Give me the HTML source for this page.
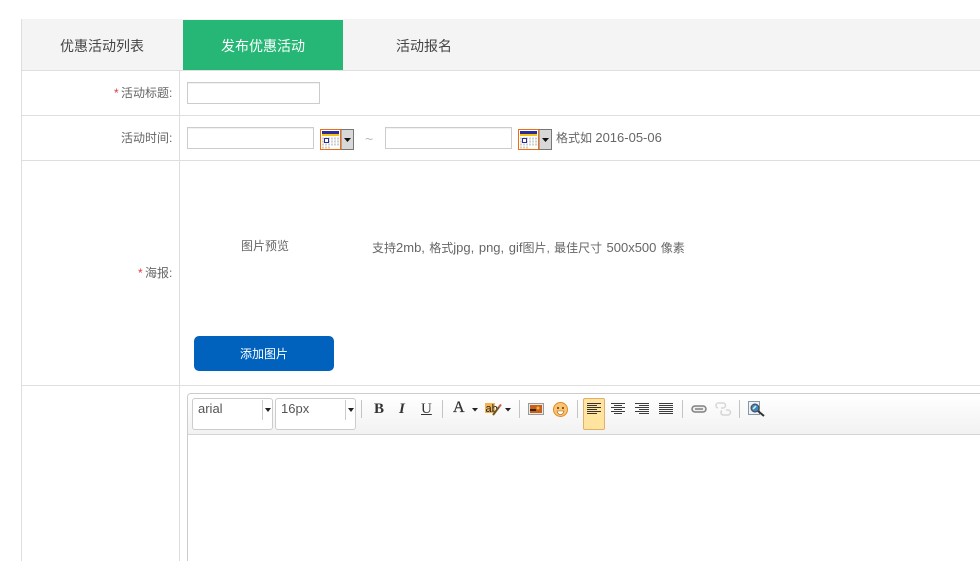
<!DOCTYPE html>
<html lang="zh">
<head>
<meta charset="utf-8">
<title>发布优惠活动</title>
<style>
html,body{margin:0;padding:0;background:#fff;width:980px;height:561px;overflow:hidden;}
#w{position:relative;width:980px;height:561px;overflow:hidden;font-family:"Liberation Sans","Noto Sans CJK SC",sans-serif;font-size:12px;color:#666;}
.a{position:absolute;white-space:nowrap;}
.l{position:absolute;background:#dedede;}
.inp{position:absolute;box-sizing:border-box;border:1px solid #ccc;background:#fff;height:22px;box-shadow:inset 0 1px 1px rgba(0,0,0,.06);}
.sel{position:absolute;box-sizing:border-box;top:398px;height:32px;width:81px;border:1px solid #ccc;border-radius:3px;background:#fff;font-size:13px;color:#555;padding-left:5px;line-height:19px;}
.sel i{position:absolute;left:69px;top:1px;width:1px;height:20px;background:#ccc;}
.sel b{position:absolute;left:72px;top:9px;border:3px solid transparent;border-top:4px solid #222;border-bottom:0;}
.sep{position:absolute;top:400px;width:1px;height:18px;background:#c4c4c4;}
svg{position:absolute;overflow:visible;}
.r{color:#e4393c;}
.n{font-size:13px;}
</style>
</head>
<body>
<div id="w">
<div class="a" style="left:21px;top:19px;width:959px;height:51px;background:#f4f4f4;"></div>
<div class="a" style="left:183px;top:20px;width:160px;height:50px;background:#26b776;"></div>
<div class="a" style="left:60px;top:37px;font-size:14px;line-height:18px;color:#444;">优惠活动列表</div>
<div class="a" style="left:221px;top:37px;font-size:14px;line-height:18px;color:#fff;">发布优惠活动</div>
<div class="a" style="left:396px;top:37px;font-size:14px;line-height:18px;color:#444;">活动报名</div>

<div class="l" style="left:21px;top:19px;width:1px;height:542px;"></div>
<div class="l" style="left:179px;top:70px;width:1px;height:491px;"></div>
<div class="l" style="left:21px;top:70px;width:959px;height:1px;"></div>
<div class="l" style="left:21px;top:115px;width:959px;height:1px;"></div>
<div class="l" style="left:21px;top:160px;width:959px;height:1px;"></div>
<div class="l" style="left:21px;top:385px;width:959px;height:1px;"></div>

<div class="a" style="left:114px;top:85px;line-height:16px;"><span class="r">*</span></div>
<div class="a" style="left:121px;top:85px;line-height:16px;">活动标题:</div>
<div class="a" style="left:121px;top:130px;line-height:16px;">活动时间:</div>
<div class="a" style="left:138px;top:265px;line-height:16px;"><span class="r">*</span></div>
<div class="a" style="left:145px;top:265px;line-height:16px;">海报:</div>

<div class="inp" style="left:187px;top:82px;width:133px;"></div>
<div class="inp" style="left:187px;top:127px;width:127px;"></div>
<div class="inp" style="left:385px;top:127px;width:127px;"></div>

<!-- date picker buttons -->
<svg style="left:320px;top:129px;" width="34" height="21" viewBox="0 0 34 21">
<rect x="21" y="0.500" width="12.500" height="20" fill="#d8d8d8" stroke="#777"/>
<path d="M24 9h7l-3.500 4z" fill="#111"/>
<rect x="0.500" y="0.500" width="20" height="20" fill="#fff" stroke="#f26b0c"/>
<rect x="2" y="2" width="17" height="3" fill="#2b2b9a"/><rect x="2" y="5" width="17" height="2" fill="#f3c316"/>
<path d="M2 9.500h17M2 12.500h17M2 15.500h17M2 18.500h9" stroke="#cfcfcf" stroke-width="2" stroke-dasharray="2 1" fill="none"/>
<rect x="4.500" y="9.500" width="4" height="4" fill="#fff" stroke="#2b2b9a"/>
</svg>
<svg style="left:518px;top:129px;" width="34" height="21" viewBox="0 0 34 21">
<rect x="21" y="0.500" width="12.500" height="20" fill="#d8d8d8" stroke="#777"/>
<path d="M24 9h7l-3.500 4z" fill="#111"/>
<rect x="0.500" y="0.500" width="20" height="20" fill="#fff" stroke="#f26b0c"/>
<rect x="2" y="2" width="17" height="3" fill="#2b2b9a"/><rect x="2" y="5" width="17" height="2" fill="#f3c316"/>
<path d="M2 9.500h17M2 12.500h17M2 15.500h17M2 18.500h9" stroke="#cfcfcf" stroke-width="2" stroke-dasharray="2 1" fill="none"/>
<rect x="4.500" y="9.500" width="4" height="4" fill="#fff" stroke="#2b2b9a"/>
</svg>
<div class="a" style="left:365px;top:131px;line-height:16px;font-size:14px;color:#bbb;">~</div>
<div class="a" style="left:556px;top:130px;line-height:16px;">格式如 <span class="n">2016-05-06</span></div>

<div class="a" style="left:241px;top:238px;line-height:16px;">图片预览</div>
<div class="a" style="left:372px;top:240px;line-height:16px;word-spacing:1px;">支持<span class="n">2mb,</span> 格式<span class="n">jpg, png, gif</span>图片, 最佳尺寸 <span class="n">500x500</span> 像素</div>
<div class="a" style="left:194px;top:336px;width:140px;height:35px;background:#0062bd;border-radius:5px;color:#fff;text-align:center;line-height:36px;">添加图片</div>

<!-- editor -->
<div class="a" style="left:187px;top:393px;width:800px;height:180px;box-sizing:border-box;border:1px solid #ccc;border-radius:4px 0 0 0;background:#fff;"></div>
<div class="a" style="left:188px;top:394px;width:792px;height:40px;border-radius:3px 0 0 0;background:linear-gradient(#fff,#f2f2f2);border-bottom:1px solid #d4d4d4;"></div>

<div class="sel" style="left:192px;">arial<i></i><b></b></div>
<div class="sel" style="left:275px;">16px<i></i><b></b></div>
<div class="sep" style="left:361px;"></div>
<div class="a" style="left:374px;top:401px;font:bold 15px/16px 'Liberation Serif',serif;color:#333;">B</div>
<div class="a" style="left:399px;top:401px;font:italic bold 15px/16px 'Liberation Serif',serif;color:#333;">I</div>
<div class="a" style="left:421px;top:401px;font:15px/16px 'Liberation Serif',serif;text-decoration:underline;color:#333;">U</div>
<div class="sep" style="left:442px;"></div>
<div class="a" style="left:453px;top:400px;font:16px/16px 'Liberation Serif',serif;-webkit-text-stroke:.3px #333;color:#333;">A</div>
<svg style="left:472px;top:408px;" width="6" height="4"><path d="M0 0h6l-3 3.500z" fill="#222"/></svg>
<!-- highlight -->
<svg style="left:485px;top:402px;" width="18" height="14" viewBox="0 0 18 14">
<rect x="0" y="1" width="10" height="10" fill="#f5b454"/>
<text x="0.500" y="10" font-family="Liberation Sans" font-size="11" fill="#222">ab</text>
<path d="M8 13l6-8" stroke="#6b5a20" stroke-width="2"/><path d="M14 5l2-2.500" stroke="#d9534f" stroke-width="2"/>
</svg>
<svg style="left:505px;top:408px;" width="6" height="4"><path d="M0 0h6l-3 3.500z" fill="#222"/></svg>
<div class="sep" style="left:519px;"></div>
<!-- image -->
<svg style="left:528px;top:403px;" width="16" height="12" viewBox="0 0 16 12">
<rect x="0.500" y="0.500" width="15" height="11" fill="#e8e8e8" stroke="#999"/>
<rect x="2" y="2" width="12" height="8" fill="#c9601a"/><rect x="2" y="6" width="6" height="2" fill="#3a2410"/><circle cx="10" cy="5" r="1.500" fill="#f6b33c"/>
</svg>
<!-- smiley -->
<svg style="left:553px;top:402px;" width="15" height="15" viewBox="0 0 15 15">
<circle cx="7.500" cy="7.500" r="7" fill="#f8c675" stroke="#e08a22"/>
<circle cx="5" cy="6" r="1.100" fill="#8a4a10"/><circle cx="10" cy="6" r="1.100" fill="#8a4a10"/>
<path d="M4 9h7q-1 3.500-3.500 3.500T4 9z" fill="#fff" stroke="#a85f14" stroke-width=".6"/>
</svg>
<div class="sep" style="left:577px;"></div>
<!-- align active -->
<div class="a" style="left:583px;top:398px;width:22px;height:32px;box-sizing:border-box;background:#ffe4a0;border:1px solid #e0b068;border-radius:2px;"></div>
<svg style="left:587px;top:403px;" width="15" height="11" viewBox="0 0 15 11"><path d="M0 .5h14M0 2.500h10M0 4.500h14M0 6.500h10M0 8.500h14M0 10.500h10" stroke="#333" fill="none"/></svg>
<svg style="left:611px;top:403px;" width="15" height="11" viewBox="0 0 15 11"><path d="M0 .5h14M3 2.500h8M0 4.500h14M3 6.500h8M0 8.500h14M3 10.500h8" stroke="#3c3c3c" fill="none"/></svg>
<svg style="left:635px;top:403px;" width="15" height="11" viewBox="0 0 15 11"><path d="M0 .5h14M4 2.500h10M0 4.500h14M4 6.500h10M0 8.500h14M4 10.500h10" stroke="#3c3c3c" fill="none"/></svg>
<svg style="left:659px;top:403px;" width="15" height="11" viewBox="0 0 15 11"><path d="M0 .5h14M0 2.500h14M0 4.500h14M0 6.500h14M0 8.500h14M0 10.500h14" stroke="#3c3c3c" fill="none"/></svg>
<div class="sep" style="left:682px;"></div>
<!-- link -->
<svg style="left:691px;top:404px;" width="16" height="10" viewBox="0 0 16 10">
<rect x="1" y="2" width="14" height="6" rx="3" fill="#eee" stroke="#808080" stroke-width="1.500"/>
<path d="M4 5h8" stroke="#808080" stroke-width="1.500"/>
</svg>
<!-- unlink -->
<svg style="left:716px;top:402px;" width="15" height="15" viewBox="0 0 15 15">
<path d="M3 1h4a2 2 0 0 1 0 5H5M3 1a2.500 2.500 0 0 0-1 5" fill="none" stroke="#d6d6d6" stroke-width="1.500"/>
<path d="M10 8h2a2.500 2.500 0 0 1 0 5H7a2.500 2.500 0 0 1-1-4.500" fill="none" stroke="#d6d6d6" stroke-width="1.500"/>
</svg>
<div class="sep" style="left:739px;"></div>
<!-- preview -->
<svg style="left:748px;top:401px;" width="17" height="16" viewBox="0 0 17 16">
<rect x="0.500" y="0.500" width="11" height="13" fill="#eef2f6" stroke="#8a96a4"/>
<circle cx="7" cy="7" r="4" fill="#3c86c6" stroke="#444"/>
<path d="M5 8l3-3" stroke="#e8f4d0" stroke-width="1.500"/>
<path d="M10 10l6 5" stroke="#333" stroke-width="2"/>
</svg>
</div>
</body>
</html>
